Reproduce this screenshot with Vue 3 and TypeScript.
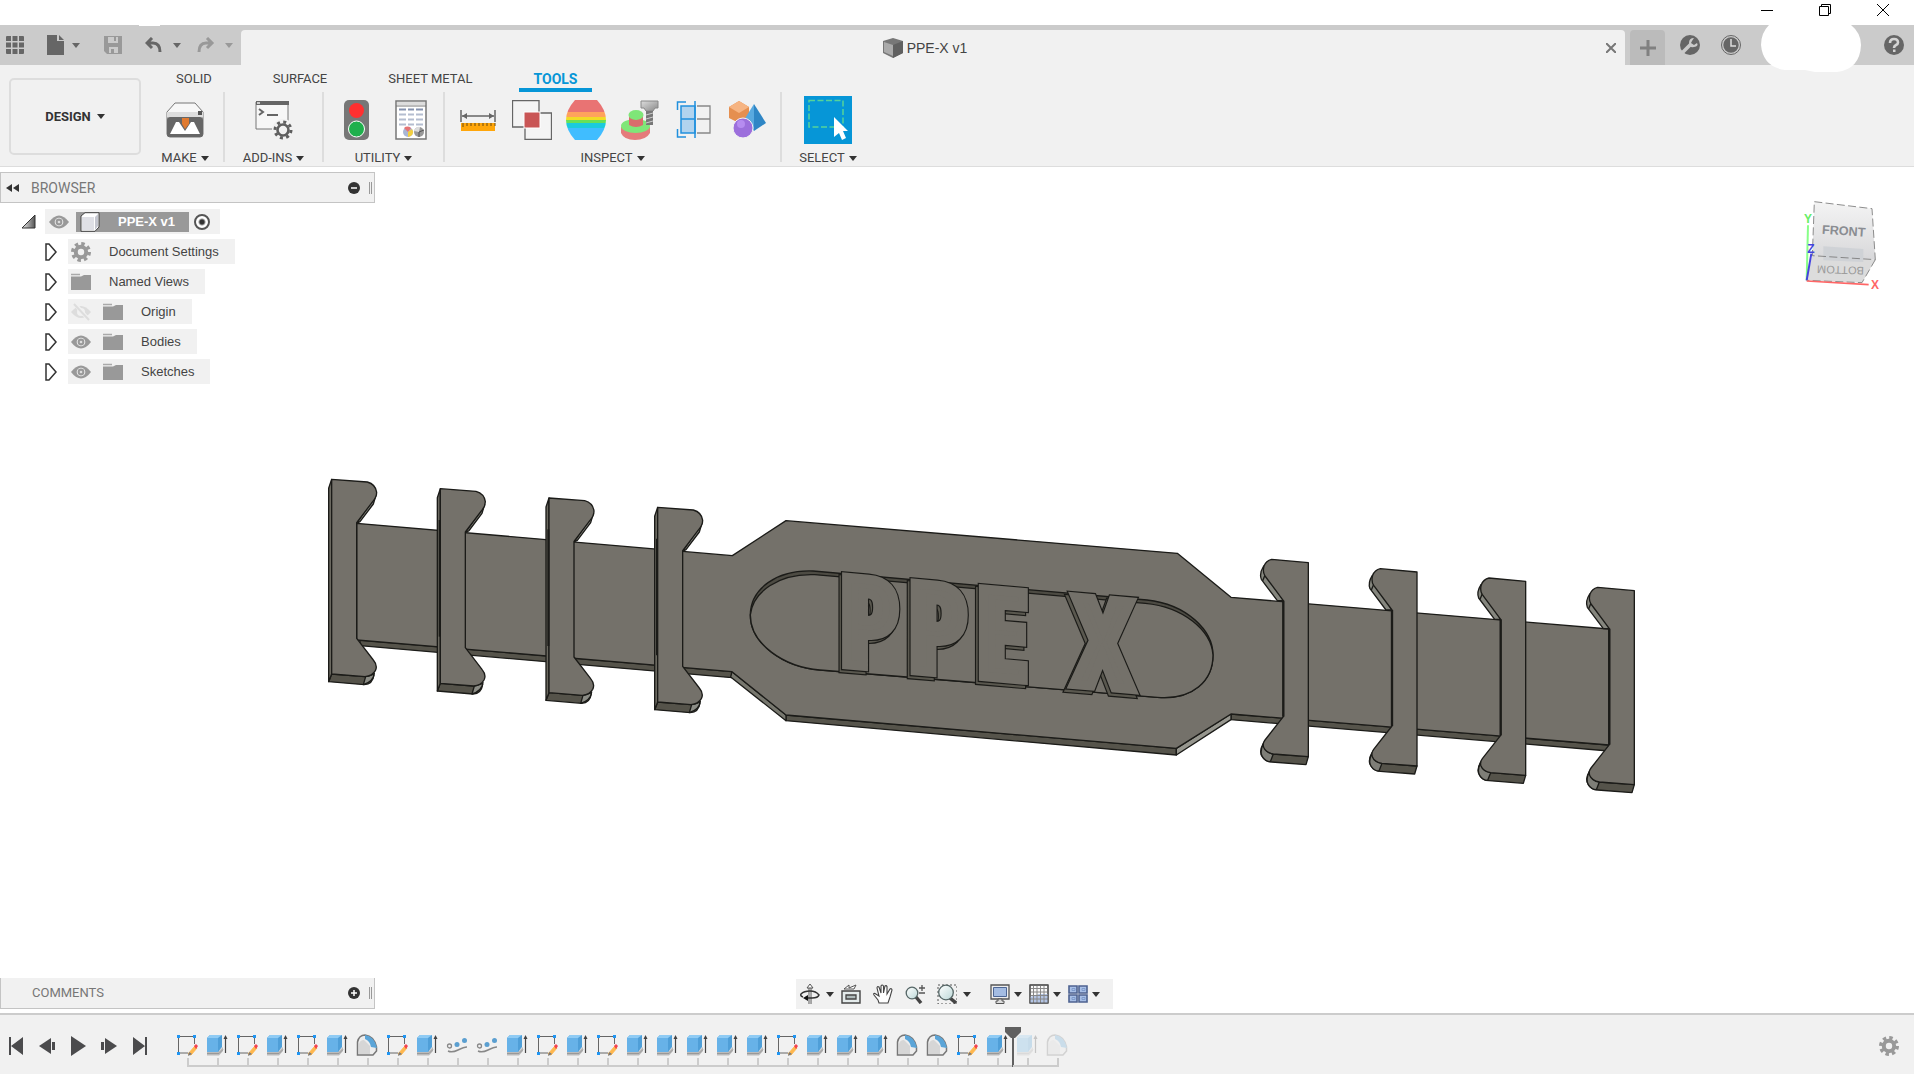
<script setup lang="ts">
import { ref } from 'vue'

type Feature = 'sketch' | 'extrude' | 'fillet' | 'path'

const tabs = ['SOLID', 'SURFACE', 'SHEET METAL', 'TOOLS']
const activeTab = ref('TOOLS')
const activated = ref('root')

const groups = [
  { label: 'MAKE', cls: 'g-make', icons: ['print'] },
  { label: 'ADD-INS', cls: 'g-addins', icons: ['script'] },
  { label: 'UTILITY', cls: 'g-utility', icons: ['traffic', 'report'] },
  { label: 'INSPECT', cls: 'g-inspect', icons: ['measure', 'interference', 'curvature', 'section', 'mass', 'component'] },
  { label: 'SELECT', cls: 'g-select', icons: ['select'] },
]

const nodes = [
  { name: 'Document Settings', eye: '', icon: 'gear' },
  { name: 'Named Views', eye: '', icon: 'folder' },
  { name: 'Origin', eye: 'eye-off', icon: 'folder' },
  { name: 'Bodies', eye: 'eye', icon: 'folder' },
  { name: 'Sketches', eye: 'eye', icon: 'folder' },
]

const navFirst = [
  { id: 'orbit', caret: true },
  { id: 'lookat', caret: false },
  { id: 'pan', caret: false },
  { id: 'zoom', caret: false },
  { id: 'zoomwin', caret: true },
]
const navSecond = ['display', 'gridset', 'viewports']
const playback = ['first', 'prev', 'play', 'next', 'last']

const codes: Record<string, Feature> = { S: 'sketch', E: 'extrude', F: 'fillet', P: 'path' }
const features: Feature[] = [...'SESESEFSEPPESESEEEEESEEEFFSEEF'].map((c) => codes[c])
const markerAfter = 27

const clips = [0, 1, 2, 3]
const letters = [
  { ch: 'P', x: 2518 },
  { ch: 'P', x: 2723 },
  { ch: 'E', x: 2928 },
  { ch: 'X', x: 3222 },
]
</script>

<template>
  <svg class="defs" aria-hidden="true">
    <defs>
      <linearGradient id="metal" x1="0" y1="0" x2="1" y2="1">
        <stop offset="0" stop-color="#ddd" /><stop offset="1" stop-color="#888" />
      </linearGradient>
      <linearGradient id="lens" x1="0" y1="0" x2="1" y2="1">
        <stop offset="0" stop-color="#fff" /><stop offset="1" stop-color="#bcd8d8" />
      </linearGradient>
      <linearGradient id="face" x1="0" y1="0" x2="0" y2="1">
        <stop offset="0" stop-color="#f4f4f4" /><stop offset="1" stop-color="#d8d8da" />
      </linearGradient>
      <linearGradient id="corner" x1="0" y1="0" x2="1" y2="0">
        <stop offset="0" stop-color="#eee" /><stop offset="1" stop-color="#555" />
      </linearGradient>
    </defs>

    <symbol id="i-print" viewBox="0 0 40 40">
      <path d="M2 12 10 3H30L38 12V34Q38 37 35 37H5Q2 37 2 34Z" fill="#f7f7f7" stroke="#777" />
      <path d="M2 12H38V17H2Z" fill="#ddd" /><path d="M33 11h4v4h-4z" fill="#555" />
      <path d="M2 20Q2 17 5 17H35Q38 17 38 20V34Q38 37 35 37H5Q2 37 2 34Z" fill="#666" />
      <path d="M5 34 11 22H14L20 31 26 22H29L35 34Z" fill="#fff" />
      <path d="M17 18H24V24L20 29 17 24Z" fill="#e07a30" />
    </symbol>
    <symbol id="i-script" viewBox="0 0 40 40">
      <path d="M2 2H34V29H2Z" fill="#f7f7f7" stroke="#777" /><path d="M2 1H35V5H2Z" fill="#666" /><path d="M3 2h3v2h-3z" fill="#ccc" />
      <path d="m5 9 4 3-4 3M13 15H24" fill="none" stroke="#666" stroke-width="2" />
      <circle cx="29" cy="30" r="11" fill="#f1f1f1" />
      <circle cx="29" cy="30" r="8" fill="none" stroke="#5f5f5f" stroke-width="3" stroke-dasharray="3 3.28" />
      <circle cx="29" cy="30" r="5.5" fill="#f1f1f1" stroke="#5f5f5f" stroke-width="2.6" />
    </symbol>
    <symbol id="i-traffic" viewBox="0 0 40 40">
      <rect x="7" y="0" width="25" height="40" rx="5" fill="#777" />
      <circle cx="19.5" cy="10.500" r="7.500" fill="#ff3030" />
      <circle cx="19.500" cy="29" r="8" fill="#1fb04c" stroke="#fff" />
    </symbol>
    <symbol id="i-report" viewBox="0 0 40 40">
      <path d="M5 1H35V39H5Z" fill="#fff" stroke="#777" stroke-width="1.500" /><path d="M6 2H34V5H6Z" fill="#ddd" /><path d="M5 6H35" stroke="#777" />
      <path d="M8 9.500h7m2 0h6m2 0h7" stroke="#8491ae" stroke-width="2" />
      <path d="M8 14.500h7m2 0h6m2 0h7M8 19.500h7m2 0h6m2 0h7M8 24.500h7m2 0h6m2 0h7" stroke="#b4bdd0" stroke-width="2" />
      <circle cx="17" cy="32" r="5" fill="#a9b6d5" /><path d="M17 32 13 28A5 5 0 0 1 20 28Z" fill="#e57373" /><path d="M17 32 21 29A5 5 0 0 1 17 37Z" fill="#f3cf3f" />
      <circle cx="28" cy="32" r="5" fill="#999" /><path d="M28 32 23 31A5 5 0 0 1 29 27Z" fill="#ddd" /><path d="M28 32V37M28 32l5-2" stroke="#555" />
    </symbol>
    <symbol id="i-measure" viewBox="0 0 40 40">
      <path d="M3 10V22M37 10V22M4 16H36" stroke="#666" stroke-width="1.500" /><path d="m4 16 5-3v6zM36 16l-5-3v6z" fill="#666" />
      <path d="M3 23H37V31H3Z" fill="#ffa60a" />
      <path d="M5 23v4m4-4v3m4-3v3m4-3v3m4-3v3m4-3v3m4-3v3m4-3v3m4-3v3" stroke="#6b4a10" />
    </symbol>
    <symbol id="i-interference" viewBox="0 0 40 40">
      <path d="M0.500 0.500H27V27H0.500ZM13 13H39.500V39.500H13Z" fill="#f4f4f4" />
      <path d="M12 27H.5V.5H27V12M28 13H39.500V39.500H13V28" fill="none" stroke="#666" stroke-width="1.300" /><path d="M12 12H28V28H12Z" fill="#c95555" stroke="#fff" />
    </symbol>
    <symbol id="i-curvature" viewBox="0 0 40 40">
      <clipPath id="barrel"><path d="M9 0H31Q40 10 40 20T31 40H9Q0 30 0 20T9 0Z" /></clipPath>
      <g clip-path="url(#barrel)">
        <path d="M0 0h40v12H0z" fill="#e97373" /><path d="M0 12h40v5H0z" fill="#ffa35c" /><path d="M0 17h40v3H0z" fill="#f1dc27" />
        <path d="M0 20h40v3H0z" fill="#68e057" /><path d="M0 23h40v5H0z" fill="#1bcbdc" /><path d="M0 28h40v12H0z" fill="#40bdff" />
      </g>
    </symbol>
    <symbol id="i-section" viewBox="0 0 40 40">
      <path d="M1 27V33Q4 40 15 40T30 33V27Z" fill="#e57b7b" /><ellipse cx="15.500" cy="26" rx="14.500" ry="7" fill="#7fe678" />
      <path d="M9 15V25Q16 29 23 25V15Z" fill="#d96c6c" /><ellipse cx="16" cy="15" rx="7.500" ry="5" fill="#7fe678" />
      <path d="M21 1H38V8H35L33 11H26L24 8H21Z" fill="url(#metal)" stroke="#888" /><path d="M26 11H33V25H26Z" fill="#777" />
      <path d="m26 15 7-2m-7 6 7-2m-7 6 7-2" stroke="#ccc" />
    </symbol>
    <symbol id="i-mass" viewBox="0 0 40 40">
      <path d="M7 6H21V33H7Z" fill="#b1d3ee" stroke="#2090dd" stroke-width="1.500" /><path d="M7 19H21M21 1V38" stroke="#2090dd" stroke-width="1.500" />
      <path d="M23 6H36V33H23M23 19H36" fill="none" stroke="#888" stroke-width="1.300" />
      <path d="M12 2H3.500V10M3.500 29V37H12" fill="none" stroke="#2090dd" stroke-width="1.500" />
    </symbol>
    <symbol id="i-component" viewBox="0 0 40 40">
      <path d="M11 1 21 7V18L11 23 1 18V7Z" fill="#e58f50" /><path d="M1 7 11 13 21 7 11 1Z" fill="#f6b482" />
      <path d="M26 4 38 23 26 31Z" fill="#2f86c5" /><path d="M26 4V31L16 20Z" fill="#59a9df" />
      <circle cx="15" cy="28" r="10" fill="#9c6fdc" stroke="#f1f1f1" /><circle cx="13" cy="24" r="4" fill="#b68cf0" />
    </symbol>
    <symbol id="i-select" viewBox="0 0 48 48">
      <path d="M0 0H48V48H0Z" fill="#0696d7" /><path d="M5 4.500H39V31H5Z" fill="none" stroke="#55d39a" stroke-width="1.500" stroke-dasharray="6 2.500" />
      <path d="M30 21V41L35 37 38 44 42 42 39 35H44Z" fill="#fff" />
    </symbol>

    <symbol id="i-gear" viewBox="0 0 20 20">
      <circle cx="10" cy="10" r="8.200" fill="none" stroke="#999" stroke-width="3.600" stroke-dasharray="3.400 3.040" />
      <circle cx="10" cy="10" r="5.200" fill="none" stroke="#999" stroke-width="4" />
    </symbol>
    <symbol id="i-folder" viewBox="0 0 20 20"><path d="M0 4.500H10L13 3H20V18H0Z" fill="#999" /><path d="M0 2.500H9" stroke="#aaa" stroke-width="1.500" /></symbol>
    <symbol id="i-eye" viewBox="0 0 20 20"><path d="M0 10Q10-3 20 10 10 23 0 10Z" fill="#999" /><circle cx="10" cy="10" r="4.300" fill="#f1f1f1" /><circle cx="10" cy="10" r="3.400" fill="#999" /><circle cx="10" cy="10" r="1.300" fill="#ddd" /></symbol>
    <symbol id="i-eye-off" viewBox="0 0 20 20"><path d="M0 10Q10-2 20 10 10 22 0 10Z" fill="#ddd" /><circle cx="10" cy="10" r="4" fill="#f1f1f1" /><path d="m3 1 15 17" stroke="#f1f1f1" stroke-width="4" /><path d="m3 2 15 16" stroke="#ddd" stroke-width="2" /></symbol>
    <symbol id="i-cube" viewBox="0 0 20 20"><path d="M1 4 5 0.700H19V15L15 19.300H1Z" fill="#fff" stroke="#444" /><path d="M2 5H14V18H2Z" fill="#dfe0e6" /><path d="m15 5 3-3V14l-3 4z" fill="#c4c6cf" /></symbol>

    <symbol id="i-orbit" viewBox="0 0 20 20"><path d="M10 2V20" stroke="#555" stroke-width="3" /><path d="M10 2V20" stroke="#fff" /><path d="m10 0 3 4H7z" fill="#fff" stroke="#555" /><path d="M3 13Q0 12 1 10 4 7 10 7T19 11Q18 14 12 14H5" fill="none" stroke="#333" stroke-width="1.500" /><path d="M3 14 8 11v6z" fill="#111" /></symbol>
    <symbol id="i-lookat" viewBox="0 0 20 20"><path d="M1 7H19V19H1Z" fill="#e4ebeb" stroke="#444" stroke-width="1.400" /><path d="M5 11H15V15H5Z" fill="#aebaba" stroke="#444" stroke-width="1.300" /><path d="M3 5 8 1V4L15 1 13 5Z" fill="#fff" stroke="#555" /></symbol>
    <symbol id="i-pan" viewBox="0 0 20 20"><path d="M6 19 5 16 1 11Q0 9 2 9.500L6 12 4 4Q4 2 6 3L8 9V2Q9 0 10.500 2V9L12 2Q13 1 14 2.500V10L17 5Q18.500 4 19 6L17 13 15 19Z" fill="#fff" stroke="#444" stroke-width="1.100" /></symbol>
    <symbol id="i-zoom" viewBox="0 0 20 20"><path d="m11 13 5 6" stroke="#444" stroke-width="3.500" /><circle cx="7" cy="9" r="5.800" fill="url(#lens)" stroke="#566" stroke-width="1.300" /><path d="M14 4h6m-3-3v6m-3 2h6" stroke="#555" stroke-width="1.300" /></symbol>
    <symbol id="i-zoomwin" viewBox="0 0 20 20"><path d="M1 1H20V20H1Z" fill="none" stroke="#555" stroke-dasharray="2 2" /><path d="m13 14 6 5" stroke="#444" stroke-width="3.500" /><circle cx="9" cy="8.500" r="7.300" fill="url(#lens)" stroke="#566" stroke-width="1.300" /></symbol>
    <symbol id="i-display" viewBox="0 0 20 20"><path d="M1 1H19V15H1Z" fill="#eee" stroke="#555" stroke-width="1.300" /><path d="M3.500 3.500H16.500V12.500H3.500Z" fill="#a4bce2" stroke="#4d6694" /><path d="M8 15h4v2h2v2.500H6V17h2z" fill="#ddd" stroke="#555" /></symbol>
    <symbol id="i-gridset" viewBox="0 0 20 20"><path d="M1 1H19V19H1Z" fill="#fafafa" stroke="#555" stroke-width="1.400" /><path d="M10 10H19V19H1V13z" fill="#b3c4e4" /><path d="M4.500 1v18M8 1v18m3.500-18v18M15 1v18M1 4.500h18M1 8h18M1 11.500h18M1 15h18" stroke="#888" /><path d="M1 1H19V19H1Z" fill="none" stroke="#555" /></symbol>
    <symbol id="i-viewports" viewBox="0 0 20 20"><path d="M1 2h8v7H1zm10 0h8v7h-8zM1 11h8v7H1zm10 0h8v7h-8z" fill="#a8bfe6" stroke="#4d6290" stroke-width="1.600" /><path d="M4 4.500h3v2H4zm10 0h3v2h-3zM4 13.500h3v2H4zm10 0h3v2h-3z" fill="none" stroke="#7e9acb" /></symbol>

    <symbol id="i-first" viewBox="0 0 20 20"><path d="M3 1h2v18H3zM17 1V19L5 10Z" fill="#4b4b4d" /></symbol>
    <symbol id="i-prev" viewBox="0 0 20 20"><path d="M14 2V18L2 10ZM15 6h3v8h-3z" fill="#4b4b4d" /></symbol>
    <symbol id="i-play" viewBox="0 0 20 20"><path d="M3 0 18 10 3 20Z" fill="#4b4b4d" /></symbol>
    <symbol id="i-next" viewBox="0 0 20 20"><path d="M6 2 18 10 6 18ZM2 6h3v8H2z" fill="#4b4b4d" /></symbol>
    <symbol id="i-last" viewBox="0 0 20 20"><path d="M15 1h2v18h-2zM3 1V19L15 10Z" fill="#4b4b4d" /></symbol>

    <symbol id="i-sketch" viewBox="0 0 22 22">
      <path d="M3 2.500H19M2.500 4V18M18.500 4V10M4 19H12" fill="none" stroke="#666" />
      <path d="M1 1h3v3H1zM17 1h3v3h-3zM1 18h3v3H1z" fill="#2196f3" />
      <path d="m12 20 7-8 2 2-6 7z" fill="#ffb74d" stroke="#ffb74d" /><path d="m18 12 2-2 2 2-2 3z" fill="#f44350" /><path d="m13 18 3 2-4 2z" fill="#777" />
    </symbol>
    <symbol id="i-extrude" viewBox="0 0 22 22">
      <path d="M1 17H13L17 13V17L13 21.500H1Z" fill="#bbb" /><path d="M1 19.500H13l4-4" fill="none" stroke="#999" />
      <path d="M1 4 4 1H16V13L12 18H1Z" fill="#4f9fd8" /><path d="M1 4H12V18H1Z" fill="#67b2e8" /><path d="M1 4 4 1H16L12 4Z" fill="#8fcbf4" />
      <path d="M19.500 3V19" stroke="#444" stroke-width="1.200" /><path d="m19.500 1 2 4h-4z" fill="#444" />
    </symbol>
    <symbol id="i-fillet" viewBox="0 0 22 22">
      <path d="M1.500 8Q3 1 9 1 18 2 20.500 13V17L17 21H1.500Z" fill="#ededed" stroke="#777" stroke-width="1.500" />
      <path d="M3 10Q4 6 8 6L14 12V20H3Z" fill="#d6d6d6" /><path d="M9 1Q18 2 21 14L15 13Q14 7 9 5Z" fill="#5ba5d8" />
    </symbol>
    <symbol id="i-path" viewBox="0 0 22 22">
      <path d="M2 17Q6 19 12 16T21 13" fill="none" stroke="#888" stroke-width="1.500" />
      <circle cx="3.500" cy="12" r="2" fill="none" stroke="#888" stroke-width="1.300" /><circle cx="11" cy="10.500" r="2.500" fill="#5b9fd0" /><circle cx="18.500" cy="6.500" r="2.500" fill="#5b9fd0" />
    </symbol>
  </svg>

  <div class="app">
    <header class="window-bar">
      <button aria-label="Minimize"><svg width="12" height="12"><path d="M0 6.500H12" stroke="#000" /></svg></button>
      <button aria-label="Restore"><svg width="12" height="12"><path d="M.5 2.500H9.500V11.500H.5ZM2.500 2.500V.5H11.500V9.500H9.500" fill="none" stroke="#000" /></svg></button>
      <button aria-label="Close"><svg width="12" height="12"><path d="M0 0 12 12M12 0 0 12" stroke="#000" /></svg></button>
    </header>

    <div class="doc-bar">
      <i class="notch"></i>
      <div class="quick">
        <button aria-label="Data panel"><svg width="18" height="18" fill="#666"><path d="M0 1q0-1 1-1h4v5H0zM6.500 0h5v5h-5zM13 0h4q1 0 1 1v4h-5zM0 6.500h5v5H0zM6.500 6.500h5v5h-5zM13 6.500h5v5h-5zM0 13h5v5H1q-1 0-1-1zM6.500 13h5v5h-5zM13 13h5v4q0 1-1 1h-4z" /></svg></button>
        <button class="file" aria-label="File"><svg width="17" height="20" fill="#666"><path d="M0 0H10V6H17V20H0ZM12 0 17 5H12Z" /></svg><i class="caret mid"></i></button>
        <button class="save" aria-label="Save"><svg width="18" height="18"><path d="M0 0H18V18H3L0 15Z" fill="#999" /><path d="M4 1H14V7H4ZM5 11H14V17H5Z" fill="#cbcbcb" /><path d="M10 1h2v4h-2zM7 13h3v4H7z" fill="#999" /></svg></button>
        <button class="undo" aria-label="Undo"><svg width="18" height="16" fill="none" stroke="#666" stroke-width="3"><path d="M7 1 2 6 7 11M2 6H8Q15 6 15 15" /></svg><i class="caret mid"></i></button>
        <button class="redo" aria-label="Redo"><svg width="18" height="16" fill="none" stroke="#999" stroke-width="3"><path d="M10 1 15 6 10 11M15 6H9Q2 6 2 15" /></svg><i class="caret light"></i></button>
      </div>
      <div class="doc-tab">
        <svg width="20" height="20"><path d="M0 3 10 0 20 3V15L10 20 0 15Z" fill="#777" /><path d="M1 4 10 7V18L1 14Z" fill="#aaa" /><path d="M10 7 20 3V15L10 20Z" fill="#606060" /></svg>
        <span>PPE-X v1</span>
        <button class="close-tab" aria-label="Close document"><svg width="10" height="10"><path d="M0 0 10 10M10 0 0 10" stroke="#777" stroke-width="2" /></svg></button>
      </div>
      <button class="new-tab" aria-label="New design"><svg width="16" height="16"><path d="M8 0V16M0 8H16" stroke="#808080" stroke-width="3" /></svg></button>
      <div class="status">
        <button aria-label="Extensions"><svg width="20" height="20"><circle cx="10" cy="10" r="10" fill="#666" /><path d="m2 18 9-9" stroke="#cbcbcb" stroke-width="3.500" /><path d="M14 3Q9 3 9 8T14 12 17 8L14 10 11 8 12 6Z" fill="#cbcbcb" /></svg></button>
        <button aria-label="Job status"><svg width="20" height="20"><circle cx="10" cy="10" r="9.500" fill="none" stroke="#666" /><circle cx="10" cy="10" r="7.700" fill="#666" /><path d="M10 4V11H15" fill="none" stroke="#ddd" stroke-width="1.500" /></svg></button>
        <button class="help" aria-label="Help"><svg width="20" height="20"><circle cx="10" cy="10" r="10" fill="#666" /><path d="M6 8Q6 4 10 4T14 7.500Q14 9 12 10T10 13" fill="none" stroke="#d4d4d4" stroke-width="2.600" /><path d="M9 14.500h2.500v2.500H9z" fill="#d4d4d4" /></svg></button>
      </div>
      <svg class="account" width="100" height="47"><path d="M8 0H90Q100 8 100 20 99 44 76 47H54L44 45H24Q2 42 0 20 0 8 8 0Z" fill="#fff" /></svg>
    </div>

    <div class="ribbon">
      <button class="workspace">DESIGN <i class="caret"></i></button>
      <div class="ribbon-body">
        <nav class="tabs" role="tablist">
          <button v-for="t in tabs" :key="t" role="tab" :class="{ active: t === activeTab }" @click="activeTab = t">{{ t }}</button>
        </nav>
        <div class="groups">
          <section v-for="g in groups" :key="g.label" class="group" :class="g.cls">
            <div class="tools">
              <button v-for="i in g.icons" :key="i" :aria-label="i"><svg><use :href="'#i-' + i" /></svg></button>
            </div>
            <button class="group-label">{{ g.label }} <i class="caret"></i></button>
          </section>
        </div>
      </div>
    </div>

    <main class="canvas">
      <svg class="model" viewBox="0 0 5742 2538" stroke="#1b1b18" stroke-width="4" stroke-linejoin="round">
        <g fill="#56544b">
          <path d="M1080 1419 2196 1514V1532L1080 1436ZM2358 1644 3529 1744V1764L2358 1661ZM3693 1641 4827 1734V1752L3693 1658Z" />
          <path d="M2196 1514 2358 1644V1661L2192 1530Z" fill="#77776e" />
          <path d="M3529 1744 3693 1641V1658L3529 1764Z" fill="#96968e" />
        </g>
        <path fill="#74716a" d="M1070 1069 2197 1166 2358 1061 3532 1159 3693 1291 4827 1386V1734L3693 1641 3529 1744 2358 1644 2196 1514 1070 1419Z" />

        <g v-for="n in clips" :key="'l' + n" :transform="`translate(${930 + n * 326} ${879 + n * 28})`">
          <path fill="#85867e" d="M198 105 190 132 150 185 140 190Z" />
          <path fill="#55534a" d="M56 665 65 642 165 650Q190 640 192 645 188 673 163 674Z" />
          <path fill="#8b8c85" d="M167 650Q190 645 193 640 190 665 160 674Z" />
          <path fill="#6a685f" d="M65 58 56 85V665L65 642Z" />
          <path fill="#74716a" d="M65 58 172 66Q197 73 200 97 200 112 188 125L140 188V535L190 600Q204 617 196 632 187 648 165 650L65 642Z" />
          <path v-if="n" stroke-width="6" d="M63 152V502" />
        </g>
        <g v-for="n in clips" :key="'r' + n" :transform="`translate(${3600 + n * 326} ${1119 + n * 28})`">
          <path fill="#85867e" d="M191 78Q177 100 184 118L232 182H250Z" />
          <path fill="none" d="M196 103 188 122" />
          <path fill="#55534a" d="M190 610Q176 635 187 650 196 665 215 666L318 674 325 650 220 642Z" />
          <path fill="#7e7e77" d="M190 612Q178 635 187 650 196 665 211 665L220 642Q196 640 190 612Z" />
          <path fill="#74716a" d="M215 58 325 68V650L220 642Q197 638 191 622 187 610 195 600L250 530V182L195 108Q187 96 192 78 198 62 215 58Z" />
          <path stroke-width="7" d="M250 182V530" />
        </g>

        <path fill="#4d4b43" d="M2439 1212 3441 1299C3560 1312 3639 1390 3639 1464C3639 1540 3580 1600 3472 1591L2460 1509C2350 1500 2251 1430 2251 1344C2251 1265 2330 1208 2439 1212Z" />
        <path fill="#74716a" d="M2444 1223 3436 1309C3550 1320 3634 1390 3639 1464C3639 1540 3580 1600 3472 1591L2460 1509C2350 1500 2251 1430 2251 1344C2258 1275 2335 1219 2444 1223Z" />
        <g class="emboss">
          <g v-for="l in letters" :key="l.x" :transform="`translate(${l.x} ${1491 + Math.round((l.x - 2518) * 0.086)}) skewY(5)`">
            <text class="edge" x="-8" y="10" aria-hidden="true">{{ l.ch }}</text>
            <text class="side" x="-8" y="10" aria-hidden="true">{{ l.ch }}</text>
            <text class="edge" aria-hidden="true">{{ l.ch }}</text>
            <text class="top">{{ l.ch }}</text>
          </g>
        </g>
      </svg>

      <svg class="view-cube" viewBox="660 590 261 300">
        <path d="M703 604 876 625 886 778 697 766Z" fill="url(#face)" />
        <path d="M697 766 886 778 846 847 680 840Z" fill="#dcdcdc" />
        <path d="M730 738 850 746V785L730 780Z" fill="#cfd2d6" />
        <path d="M703 604 876 625 886 778 697 766ZM886 778 846 847 680 840" fill="none" stroke="#777" stroke-width="2.500" stroke-dasharray="24 10" />
        <path d="M684 675 680 840" stroke="#8f8" stroke-width="6" /><path d="M694 760 680 840" stroke="#44d" stroke-width="6" />
        <path d="M680 842 866 853" stroke="#f66" stroke-width="5" />
        <text class="cube-face" transform="translate(725 700) rotate(4)">FRONT</text>
        <text class="cube-under" transform="translate(852 800) rotate(182)">BOTTOM</text>
        <text class="axis" x="672" y="668" fill="#6e6">Y</text>
        <text class="axis" x="682" y="757" fill="#44d">Z</text>
        <text class="axis" x="873" y="866" fill="#f66">X</text>
      </svg>

      <aside class="browser">
        <div class="panel-bar">
          <button class="collapse" aria-label="Collapse"><svg width="13" height="8" fill="#333"><path d="M6 0V8L0 4ZM13 0V8L7 4Z" /></svg></button>
          <span>BROWSER</span>
          <button aria-label="Hide panel"><svg width="12" height="12"><circle cx="6" cy="6" r="6" fill="#333" /><path d="M3 6H9" stroke="#fff" stroke-width="1.500" /></svg></button>
          <i class="grip"></i>
        </div>
        <ul class="tree">
          <li class="root">
            <svg class="open" width="15" height="15"><path d="M14 1V14H1Z" fill="url(#corner)" stroke="#333" /></svg>
            <label class="row">
              <svg width="20" height="20"><use href="#i-eye" /></svg>
              <span class="chip"><svg width="20" height="20"><use href="#i-cube" /></svg><b>PPE-X v1</b></span>
              <input v-model="activated" type="radio" name="activated" value="root" />
            </label>
          </li>
          <li v-for="n in nodes" :key="n.name">
            <svg width="12" height="18"><path d="M1 1H4L11 9 4 17H1Z" fill="#fff" stroke="#333" stroke-width="1.500" /></svg>
            <div class="row">
              <svg v-if="n.eye" class="eye" width="20" height="20"><use :href="'#i-' + n.eye" /></svg>
              <svg width="20" height="20"><use :href="'#i-' + n.icon" /></svg>
              <span>{{ n.name }}</span>
            </div>
          </li>
        </ul>
      </aside>

      <div class="bottom-row">
        <div class="panel-bar comments">
          <span>COMMENTS</span>
          <button aria-label="Show comments"><svg width="12" height="12"><circle cx="6" cy="6" r="6" fill="#333" /><path d="M3 6H9M6 3V9" stroke="#fff" stroke-width="1.500" /></svg></button>
          <i class="grip"></i>
        </div>
        <div class="nav-bar">
          <button v-for="n in navFirst" :key="n.id" :aria-label="n.id"><svg><use :href="'#i-' + n.id" /></svg><i v-if="n.caret" class="caret"></i></button>
          <button v-for="n in navSecond" :key="n" class="tight" :aria-label="n"><svg><use :href="'#i-' + n" /></svg><i class="caret"></i></button>
        </div>
      </div>
    </main>

    <footer class="timeline">
      <div class="playback">
        <button v-for="p in playback" :key="p" :aria-label="p"><svg width="20" height="20"><use :href="'#i-' + p" /></svg></button>
      </div>
      <div class="track">
        <button v-for="(f, i) in features" :key="i" :aria-label="f" :class="{ pending: i > markerAfter }">
          <svg width="22" height="22"><use :href="'#i-' + f" /></svg>
          <svg v-if="i === markerAfter" class="marker" width="16" height="40"><path d="M0 0H16V5L10 11H6L0 5ZM7 10h2v30H7z" fill="#606060" /></svg>
        </button>
      </div>
      <button class="settings" aria-label="Timeline settings"><svg width="20" height="20"><use href="#i-gear" /></svg></button>
    </footer>
  </div>
</template>

<style>
body {
  margin: 0;
}
</style>

<style scoped>
.defs {
  position: absolute;
  width: 0;
  height: 0;
}
.app {
  display: flex;
  flex-direction: column;
  height: 100vh;
  background: #fff;
  color: #444;
  font: 13px/16px 'Liberation Sans', Arial, sans-serif;
  overflow: hidden;
}
button {
  display: flex;
  align-items: center;
  justify-content: center;
  padding: 0;
  border: 0;
  background: none;
  color: inherit;
  font: inherit;
}
svg {
  flex: none;
  display: block;
}
.caret {
  flex: none;
  border: 4px solid transparent;
  border-top: 5px solid #333;
  border-bottom: 0;
}
.caret.mid {
  border-top-color: #666;
}
.caret.light {
  border-top-color: #999;
}
.window-bar {
  display: flex;
  justify-content: flex-end;
  height: 25px;
  padding-right: 2px;
}
.window-bar button {
  width: 58px;
  height: 20px;
}
.doc-bar {
  position: relative;
  display: flex;
  align-items: flex-end;
  height: 40px;
  background: #cbcbcb;
}
.notch {
  position: absolute;
  top: 0;
  left: 139px;
  width: 21px;
  height: 1px;
  background: #fff;
}
.quick {
  display: flex;
  box-sizing: border-box;
  width: 241px;
  height: 40px;
  padding-left: 6px;
  align-items: center;
}
.quick .caret {
  margin-left: 8px;
}
.quick .file {
  margin-left: 23px;
}
.quick .save {
  margin-left: 24px;
}
.quick .undo {
  margin-left: 23px;
}
.quick .redo {
  margin-left: 16px;
}
.quick .undo .caret,
.quick .redo .caret {
  margin-left: 10px;
}
.doc-tab {
  display: flex;
  flex: 1;
  align-items: center;
  justify-content: center;
  box-sizing: border-box;
  height: 35px;
  padding-left: 11px;
  border-radius: 4px 4px 0 0;
  background: #f1f1f1;
  font-size: 14px;
}
.doc-tab span {
  margin: 0 auto 0 4px;
}
.doc-tab > svg {
  margin-left: auto;
}
.close-tab {
  width: 26px;
  height: 35px;
  margin-right: 1px;
}
.new-tab {
  width: 35px;
  height: 35px;
  margin-left: 5px;
  border-radius: 4px 4px 0 0;
  background: #bbb;
}
.status {
  display: flex;
  box-sizing: border-box;
  width: 249px;
  height: 40px;
  padding: 0 10px 0 15px;
  align-items: center;
  gap: 21px;
}
.help {
  margin-left: auto;
}
.account {
  position: absolute;
  top: 0;
  right: 53px;
}
.ribbon {
  display: flex;
  box-sizing: border-box;
  height: 102px;
  padding-left: 9px;
  border-bottom: 1px solid #ddd;
  background: #f1f1f1;
  font: 13px/16px Roboto, 'Liberation Sans', sans-serif;
}
.workspace {
  gap: 6px;
  box-sizing: border-box;
  width: 132px;
  height: 77px;
  margin-top: 13px;
  border: 2px solid #ddd;
  border-radius: 5px;
  color: #333;
  font-weight: 700;
}
.ribbon-body {
  flex: 1;
  padding-left: 6px;
}
.tabs {
  display: flex;
  gap: 31px;
  padding-left: 14px;
}
.tabs button {
  height: 27px;
  padding: 4px 15px 0;
  border-bottom: 4px solid transparent;
  box-sizing: border-box;
}
.tabs .active {
  border-color: #0696d7;
  color: #0696d7;
  font-size: 14px;
  font-weight: 700;
}
.groups {
  display: flex;
}
.group {
  display: flex;
  flex-direction: column;
  align-items: center;
  box-sizing: border-box;
  height: 70px;
  padding-top: 2px;
  border-right: 2px solid #ddd;
}
.g-make {
  width: 78px;
}
.g-addins {
  width: 99px;
}
.g-utility {
  width: 121px;
}
.g-inspect {
  width: 337px;
}
.g-select {
  width: 92px;
  border: 0;
}
.tools {
  display: flex;
  flex: none;
  height: 52px;
}
.tools button {
  width: 54px;
}
.tools svg {
  width: 40px;
  height: 40px;
}
.g-select .tools svg {
  width: 48px;
  height: 48px;
}
.group-label {
  flex: none;
  gap: 4px;
  height: 16px;
  margin-top: 4px;
}
.canvas {
  position: relative;
  display: flex;
  flex: 1;
  flex-direction: column;
  min-height: 0;
}
.model {
  position: absolute;
  inset: 0;
  width: 100%;
  height: 100%;
}
.emboss {
  font-family: 'Open Sans Condensed', 'Liberation Sans Narrow', 'Liberation Sans', sans-serif;
  font-size: 366px;
  font-weight: 700;
  stroke-linejoin: miter;
}
.edge {
  stroke-width: 36px;
}
.side {
  fill: #5a584f;
  stroke: #5a584f;
  stroke-width: 29px;
}
.top {
  fill: #74716a;
  stroke: #74716a;
  stroke-width: 29px;
}
.view-cube {
  position: absolute;
  top: 30px;
  right: 27px;
  width: 87px;
  height: 100px;
  font-family: 'Liberation Sans', sans-serif;
}
.cube-face {
  fill: #8a8d92;
  font-size: 38px;
  font-weight: 700;
}
.cube-under {
  fill: #999;
  font-size: 33px;
}
.axis {
  font-size: 36px;
  font-weight: 700;
}
.browser {
  position: relative;
  width: 375px;
  margin-top: 5px;
}
.panel-bar {
  display: flex;
  align-items: center;
  box-sizing: border-box;
  width: 375px;
  height: 31px;
  padding: 0 2px 0 5px;
  border: 1px solid #c4c4c4;
  background: #f1f1f1;
  color: #777;
  font: 14px/16px Roboto, 'Liberation Sans', sans-serif;
}
.panel-bar span {
  margin: 0 auto 0 12px;
}
.grip {
  width: 1px;
  height: 12px;
  margin-left: 9px;
  border: 1px solid #999;
  border-width: 0 1px;
}
.tree {
  margin: 6px 0 0;
  padding: 0;
  list-style: none;
}
.tree li {
  display: flex;
  align-items: center;
  height: 25px;
  margin-bottom: 5px;
  padding-left: 45px;
  gap: 11px;
}
.tree .root {
  padding-left: 21px;
  gap: 9px;
}
.row {
  display: flex;
  align-items: center;
  height: 25px;
  padding: 0 16px 0 3px;
  background: #f1f1f1;
}
.row > span {
  margin-left: 18px;
}
.eye {
  margin-right: 12px;
}
.root .row {
  padding: 0 10px 0 4px;
}
.root .chip {
  display: flex;
  align-items: center;
  height: 20px;
  margin: 0 5px 0 7px;
  padding: 0 14px 0 4px;
  background: #999;
  color: #fff;
}
.chip b {
  margin-left: 18px;
}
.row input {
  width: 16px;
  height: 16px;
  margin: 0;
  border: 2px solid #555;
  border-radius: 50%;
  appearance: none;
  background: radial-gradient(circle, #333 2px, #fff 4px);
}
.bottom-row {
  position: relative;
  display: grid;
  grid-template-columns: 1fr auto 1fr;
  align-items: end;
  margin-top: auto;
  padding: 0 6px 4px 0;
}
.comments {
  padding-left: 19px;
  border-top: 0;
  font-size: 13px;
}
.nav-bar {
  display: flex;
  align-items: center;
  gap: 12px;
  height: 30px;
  padding: 0 18px 0 4px;
  background: #f1f1f1;
}
.nav-bar svg {
  width: 20px;
  height: 20px;
}
.nav-bar .caret {
  margin: 0 -5px 0 6px;
}
.nav-bar .tight .caret {
  margin-left: 4px;
}
.nav-bar button:not(.tight) + .tight {
  margin-left: 12px;
}
.timeline {
  display: flex;
  box-sizing: border-box;
  height: 61px;
  padding: 0 15px 0 6px;
  border-top: 2px solid #ccc;
  background: #f1f1f1;
}
.playback {
  display: flex;
  gap: 11px;
  padding-top: 21px;
  align-items: flex-start;
}
.track {
  display: flex;
  padding: 19px 0 0 23px;
}
.track button {
  position: relative;
  width: 30px;
  height: 33px;
  padding: 0 2px 11px 0;
  box-sizing: border-box;
  background: linear-gradient(#ccc, #ccc) 14px 24px / 2px 9px no-repeat, linear-gradient(#ccc, #ccc) 0 31px / 30px 2px no-repeat;
}
.track button:first-child {
  background-position: 14px 24px, 14px 31px;
}
.track button:last-child {
  background-size: 2px 9px, 16px 2px;
}
.pending svg {
  opacity: 0.25;
}
.track .marker {
  position: absolute;
  top: -7px;
  right: -8px;
}
.settings {
  height: 62px;
  margin-left: auto;
}
</style>
